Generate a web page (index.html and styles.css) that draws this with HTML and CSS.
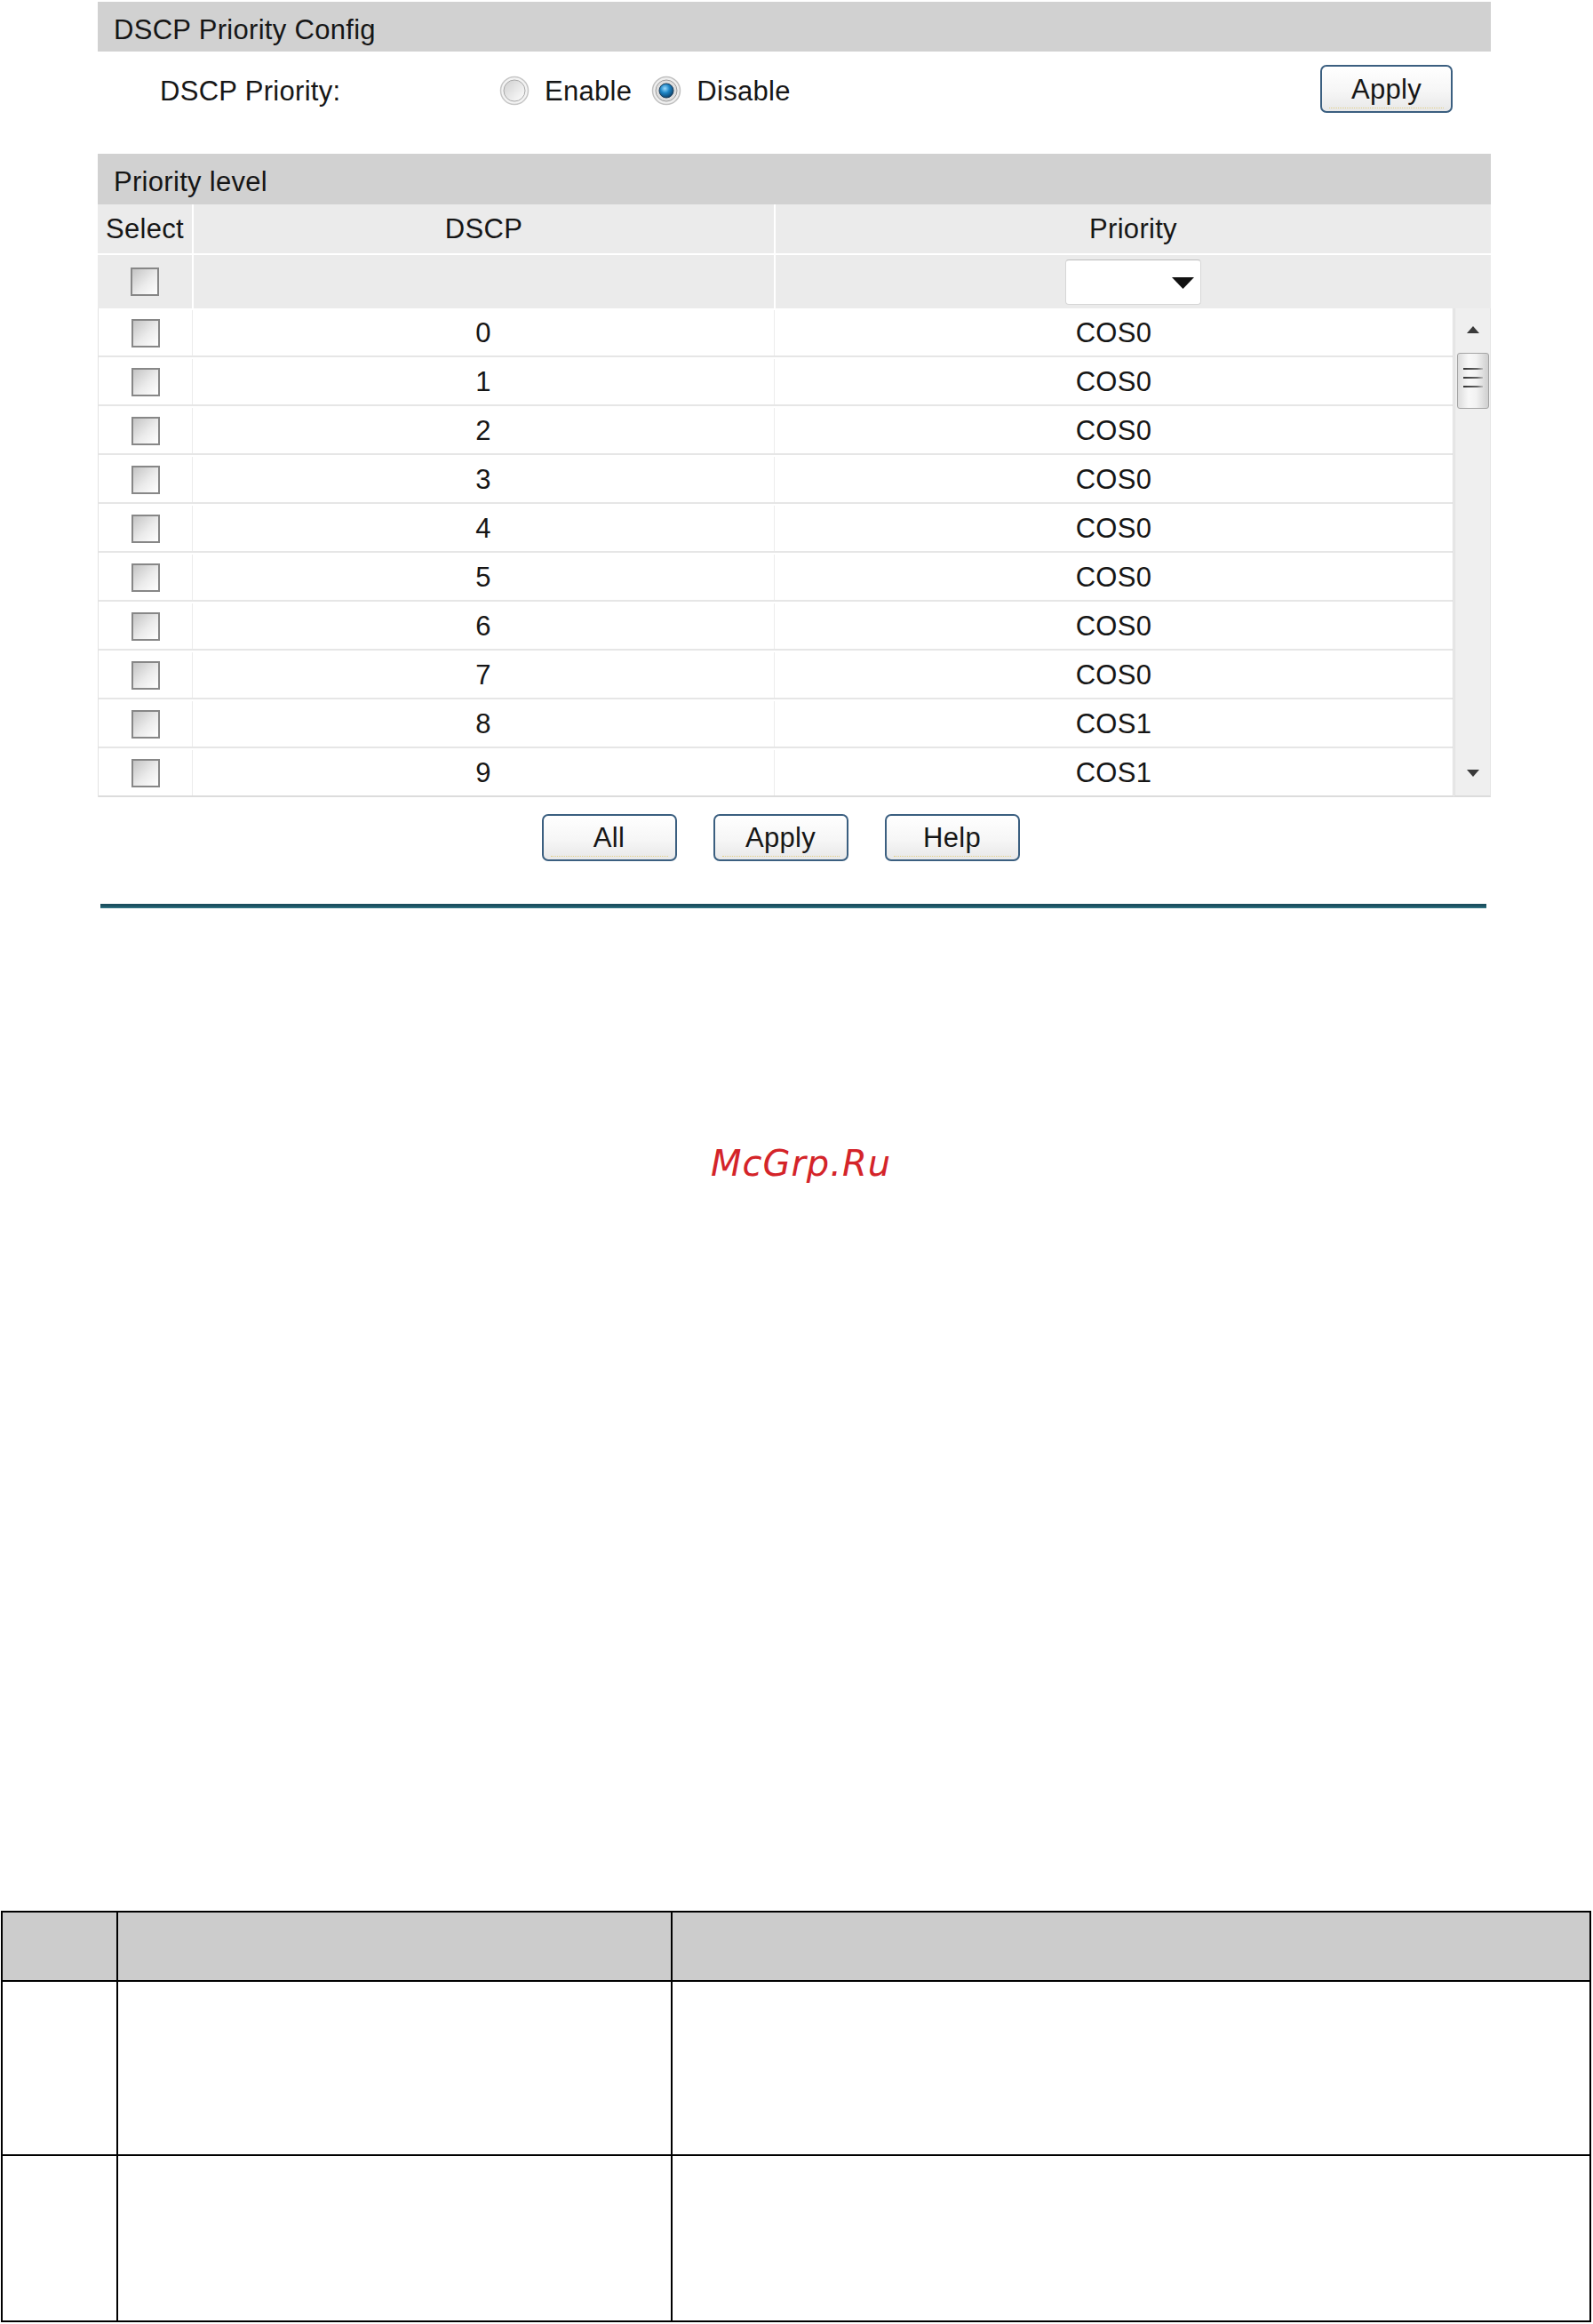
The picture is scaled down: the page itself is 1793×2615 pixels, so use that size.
FILE: index.html
```html
<!DOCTYPE html>
<html>
<head>
<meta charset="utf-8">
<title>DSCP Priority Config</title>
<link rel="stylesheet" href="styles.css">
</head>
<body>
<div class="panel">
  <div class="bar">DSCP Priority Config</div>
  <div class="config-row">
    <span class="label">DSCP Priority:</span>
    <span class="radio">
      <svg viewBox="0 0 34 34" width="34" height="34">
        <defs><linearGradient id="rg1" x1="0" y1="0" x2="1" y2="1"><stop offset="0" stop-color="#cfcfcf"/><stop offset="1" stop-color="#ffffff"/></linearGradient></defs>
        <circle cx="17" cy="17" r="15.5" fill="#f3f3f3" stroke="#c6c6c6" stroke-width="1.5"/>
        <circle cx="17" cy="17" r="12" fill="url(#rg1)" stroke="#a9a9a9" stroke-width="1"/>
      </svg>
    </span>
    <span class="radio-text">Enable</span>
    <span class="radio radio-sel">
      <svg viewBox="0 0 34 34" width="34" height="34">
        <defs><radialGradient id="rg2" cx="0.4" cy="0.35" r="0.7"><stop offset="0" stop-color="#9adcff"/><stop offset="0.45" stop-color="#1f86c6"/><stop offset="1" stop-color="#0a3a62"/></radialGradient></defs>
        <circle cx="17" cy="17" r="15.5" fill="#efefef" stroke="#c0c0c0" stroke-width="1.5"/>
        <circle cx="17" cy="17" r="12" fill="#dedede" stroke="#9c9c9c" stroke-width="1"/>
        <circle cx="17" cy="17" r="8" fill="url(#rg2)" stroke="#1c3d5a" stroke-width="1"/>
      </svg>
    </span>
    <span class="radio-text">Disable</span>
    <button class="btn btn-top">Apply</button>
  </div>

  <div class="bar bar2">Priority level</div>
  <div class="grid head">
    <div class="cell">Select</div>
    <div class="cell">DSCP</div>
    <div class="cell">Priority</div>
  </div>
  <div class="grid filter">
    <div class="cell"><span class="cb"></span></div>
    <div class="cell"></div>
    <div class="cell">
      <span class="dropdown">
        <svg class="dd-arrow" viewBox="0 0 25 13" width="25" height="13"><polygon points="0,0 25,0 12.5,13" fill="#111"/></svg>
      </span>
    </div>
  </div>

  <div class="scroll-area">
    <div class="rows">
      <div class="row"><div class="c c1"><span class="cb"></span></div><div class="c c2">0</div><div class="c c3">COS0</div></div>
      <div class="row"><div class="c c1"><span class="cb"></span></div><div class="c c2">1</div><div class="c c3">COS0</div></div>
      <div class="row"><div class="c c1"><span class="cb"></span></div><div class="c c2">2</div><div class="c c3">COS0</div></div>
      <div class="row"><div class="c c1"><span class="cb"></span></div><div class="c c2">3</div><div class="c c3">COS0</div></div>
      <div class="row"><div class="c c1"><span class="cb"></span></div><div class="c c2">4</div><div class="c c3">COS0</div></div>
      <div class="row"><div class="c c1"><span class="cb"></span></div><div class="c c2">5</div><div class="c c3">COS0</div></div>
      <div class="row"><div class="c c1"><span class="cb"></span></div><div class="c c2">6</div><div class="c c3">COS0</div></div>
      <div class="row"><div class="c c1"><span class="cb"></span></div><div class="c c2">7</div><div class="c c3">COS0</div></div>
      <div class="row"><div class="c c1"><span class="cb"></span></div><div class="c c2">8</div><div class="c c3">COS1</div></div>
      <div class="row row-last"><div class="c c1"><span class="cb"></span></div><div class="c c2">9</div><div class="c c3">COS1</div></div>
    </div>
    <div class="scrollbar">
      <svg class="sb-arrow" viewBox="0 0 14 8" width="14" height="8"><polygon points="7,0 14,8 0,8" fill="#3a3a3a"/></svg>
      <div class="thumb">
        <span class="grip"></span><span class="grip"></span><span class="grip"></span>
      </div>
      <div class="sb-space"></div>
      <svg class="sb-arrow" viewBox="0 0 14 8" width="14" height="8"><polygon points="0,0 14,0 7,8" fill="#3a3a3a"/></svg>
    </div>
  </div>

  <div class="actions">
    <button class="btn">All</button>
    <button class="btn">Apply</button>
    <button class="btn">Help</button>
  </div>
  <div class="rule"></div>
</div>

<div class="watermark">McGrp.Ru</div>

<table class="doc">
  <colgroup><col class="dc1"><col class="dc2"><col class="dc3"></colgroup>
  <tr class="doc-head"><th></th><th></th><th></th></tr>
  <tr class="doc-r1"><td></td><td></td><td></td></tr>
  <tr class="doc-r2"><td></td><td></td><td></td></tr>
</table>
</body>
</html>
```

FILE: styles.css
```css
html, body {
  margin: 0;
  padding: 0;
  background: #ffffff;
}
body {
  font-family: "Liberation Sans", Arial, sans-serif;
  font-size: 31px;
  letter-spacing: 0.3px;
  color: #161616;
}
.panel {
  margin: 2px 0 0 110px;
  width: 1568px;
}
.bar {
  height: 56px;
  box-sizing: border-box;
  padding: 7px 0 0 18px;
  line-height: 49px;
  background: #d1d1d1;
  white-space: nowrap;
}
.bar2 {
  margin-top: 31px;
  height: 57px;
}
.config-row {
  height: 84px;
  display: flex;
  align-items: center;
  padding: 6px 43px 0 70px;
  box-sizing: border-box;
}
.label {
  flex: 0 0 382px;
}
.radio {
  display: flex;
  width: 34px;
  height: 34px;
  margin-top: -2px;
}
.radio-text {
  margin-left: 17px;
  margin-right: 22px;
}
.btn {
  position: relative;
  width: 152px;
  height: 53px;
  box-sizing: border-box;
  border: 2px solid #3b5f80;
  border-radius: 7px;
  background: linear-gradient(#ffffff 0%, #f6f6f6 55%, #e8e8e8 100%);
  font-family: "Liberation Sans", Arial, sans-serif;
  font-size: 31px;
  letter-spacing: 0.3px;
  color: #161616;
  padding: 0;
  line-height: 49px;
}
.btn::after {
  content: "";
  position: absolute;
  left: 8px;
  right: 8px;
  bottom: 3px;
  border-bottom: 1px dotted #e2cf86;
}
.btn-top {
  margin-left: auto;
  margin-top: -6px;
  width: 149px;
  height: 54px;
}
.grid {
  display: grid;
  grid-template-columns: 106px 653px 1fr;
  column-gap: 2px;
  background: #ffffff;
}
.grid .cell {
  background: #ebebeb;
  display: flex;
  align-items: center;
  justify-content: center;
}
.head {
  height: 55px;
}
.filter {
  margin-top: 2px;
  height: 60px;
}
.cb {
  display: block;
  width: 32px;
  height: 32px;
  box-sizing: border-box;
  border: 2px solid #878787;
  background: linear-gradient(135deg, #c4c4c4 0%, #ebebeb 55%, #ffffff 100%);
}
.dropdown {
  position: relative;
  display: block;
  width: 153px;
  height: 51px;
  box-sizing: border-box;
  background: #ffffff;
  border: 1px solid #d6d6d6;
  border-top-color: #bdbdbd;
  border-radius: 4px;
}
.dd-arrow {
  position: absolute;
  right: 7px;
  top: 19px;
}
.scroll-area {
  display: flex;
  height: 550px;
  box-sizing: border-box;
  border-left: 1px solid #e2e2e2;
}
.rows {
  flex: 1;
  display: flex;
  flex-direction: column;
}
.row {
  height: 55px;
  box-sizing: border-box;
  border-bottom: 2px solid #e6e6e6;
  display: grid;
  grid-template-columns: 106px 655px 1fr;
  padding-top: 2px;
}
.row-last {
  border-bottom-color: #dcdcdc;
}
.c {
  display: flex;
  align-items: center;
  justify-content: center;
}
.c1, .c2 {
  border-right: 1px solid #ececec;
}
.scrollbar {
  width: 43px;
  height: 550px;
  box-sizing: border-box;
  background: #efefef;
  border-left: 3px double #dedede;
  border-right: 1px solid #e4e4e4;
  border-bottom: 2px solid #dcdcdc;
  display: flex;
  flex-direction: column;
  align-items: center;
  padding: 20px 0 21px 0;
}
.sb-arrow {
  display: block;
  flex: 0 0 auto;
}
.thumb {
  margin-top: 22px;
  width: 36px;
  height: 63px;
  box-sizing: border-box;
  border: 1px solid #a4a4a4;
  border-radius: 3px;
  background: linear-gradient(90deg, #dcdcdc 0%, #f8f8f8 35%, #f2f2f2 60%, #cfcfcf 100%);
  display: flex;
  flex-direction: column;
  align-items: center;
  padding-top: 16px;
  gap: 8px;
}
.grip {
  display: block;
  width: 22px;
  height: 2px;
  background: linear-gradient(90deg, #333 0%, #666 70%, #bbb 100%);
}
.sb-space {
  flex: 1;
}
.actions {
  margin-top: 19px;
  display: flex;
  justify-content: center;
  gap: 41px;
  padding-right: 31px;
}
.rule {
  margin: 48px 0 0 3px;
  width: 1560px;
  height: 5px;
  background: linear-gradient(#1a4c5b 0%, #1d5666 60%, #3c7f8e 100%);
}
.watermark {
  margin-top: 263px;
  height: 48px;
  line-height: 48px;
  text-align: center;
  padding-left: 10px;
  font-family: "DejaVu Sans", sans-serif;
  font-style: oblique;
  font-size: 40px;
  letter-spacing: 1px;
  color: #d42429;
}
.doc {
  margin: 817px 0 0 1px;
  width: 1790px;
  border-collapse: collapse;
  table-layout: fixed;
}
.dc1 { width: 130px; }
.dc2 { width: 624px; }
.doc th, .doc td {
  border: 2px solid #000000;
  padding: 0;
}
.doc th {
  background: #cccccc;
  border-bottom-width: 1px;
}
.doc-head th { height: 76px; }
.doc-r1 td { height: 194px; }
.doc-r2 td { height: 185px; }
```
